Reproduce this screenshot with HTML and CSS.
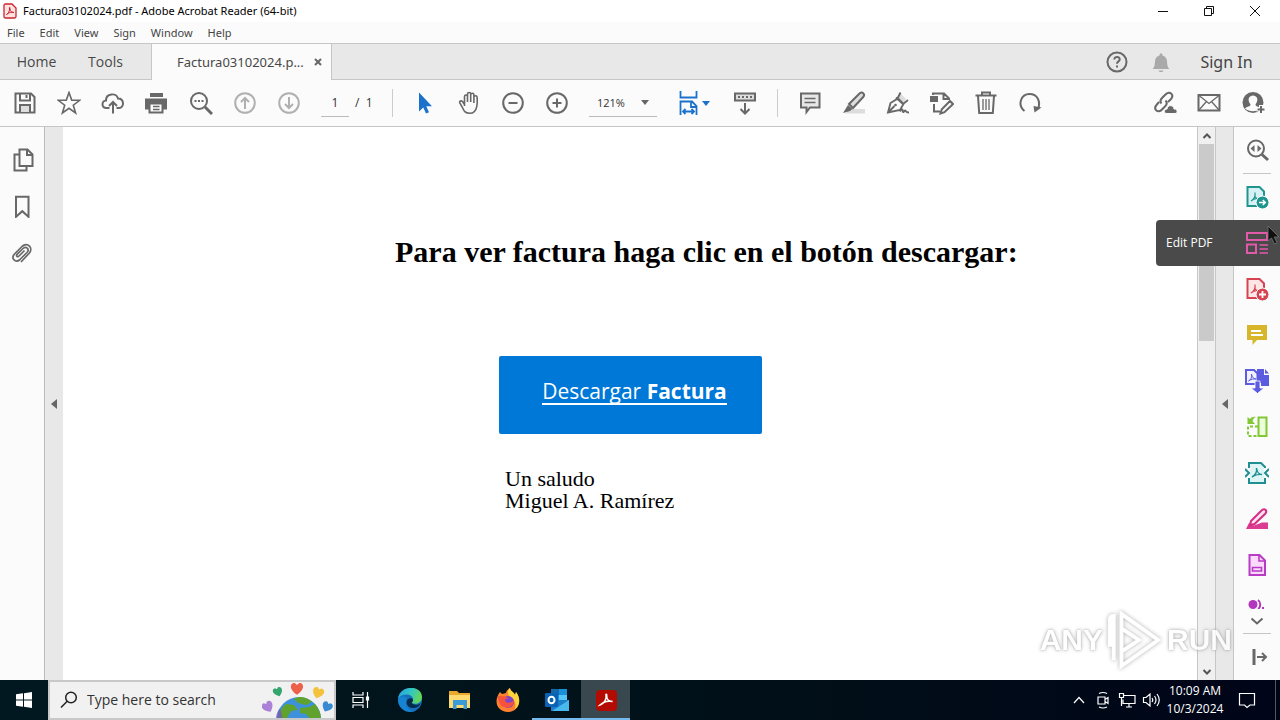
FILE: index.html
```html
<!DOCTYPE html>
<html lang="en">
<head>
<meta charset="utf-8">
<title>Factura03102024.pdf - Adobe Acrobat Reader (64-bit)</title>
<link rel="stylesheet" href="styles.css">
</head>
<body>
<header class="titlebar">
  <svg class="app-logo" viewBox="0 0 14 16"><path d="M1 2.500Q1 1 2.500 1H9l4 4v8.500Q13 15 11.500 15h-9Q1 15 1 13.500z" fill="#ffe3e1" stroke="#c9252d" stroke-width="1.300"/><path d="M3.500 11.500C5 11 7 8 6.500 5c-.3-1 .8-1 .5.500C6.700 8 9 10 11 9.500c-2-1-5 0-7.500 2z" fill="none" stroke="#c9252d"/></svg>
  <h1 class="window-title">Factura03102024.pdf - Adobe Acrobat Reader (64-bit)</h1>
  <div class="window-controls">
    <button class="win-btn" aria-label="Minimize"><svg viewBox="0 0 12 12"><path d="M1 6.500h10"/></svg></button>
    <button class="win-btn" aria-label="Restore"><svg viewBox="0 0 12 12"><path d="M1.500 3.500h7v7h-7zM3.500 3.500v-2h7v7h-2"/></svg></button>
    <button class="win-btn" aria-label="Close"><svg viewBox="0 0 12 12"><path d="M1 1l10 10M11 1L1 11"/></svg></button>
  </div>
</header>
<nav class="menubar" aria-label="Menu">
  <button>File</button><button>Edit</button><button>View</button><button>Sign</button><button>Window</button><button>Help</button>
</nav>
<nav class="tabs" aria-label="Tabs">
  <button class="tab tab-home">Home</button>
  <button class="tab tab-tools">Tools</button>
  <div class="tab-doc"><button class="tab-name">Factura03102024.p...</button><button class="tab-close" aria-label="Close tab"><svg viewBox="0 0 8 8"><path d="M1 1l6 6M7 1L1 7"/></svg></button></div>
  <div class="account">
    <button class="icon-btn" aria-label="Help"><svg class="icon" viewBox="0 0 24 24"><circle cx="12" cy="12" r="9.500"/><path d="M9.300 9.500c0-3.500 5.500-3.300 5.400-.1 0 2-2.700 2-2.700 4.300M12 15.500v2"/></svg></button>
    <button class="icon-btn bell" aria-label="Notifications"><svg class="icon" viewBox="0 0 24 24"><path d="M3.500 19c2-1.500 2.300-4 2.500-8 .2-3 1.800-5 4.500-5.600 0-3 3-3 3 0C16.200 6 17.800 8 18 11c.2 4 .5 6.500 2.500 8zM9.500 20.500h5c-.5 2-4.500 2-5 0z" fill="#a9a9a9" stroke="none"/></svg></button>
    <button class="sign-in">Sign In</button>
  </div>
</nav>
<div class="toolbar">
  <button class="icon-btn" aria-label="Save"><svg class="icon" viewBox="0 0 24 24"><path d="M2.500 2.500h15.500l3.500 3.500v15.500h-19z"/><path d="M7 2.500v7h10v-7M13.500 4v3"/><path d="M7 21v-7h10v7" fill="#ddd"/></svg></button>
  <button class="icon-btn" aria-label="Star"><svg class="icon" viewBox="0 0 24 24"><path d="M12 1.500l2.700 7.600 8 .2-6.400 4.900 2.300 7.800L12 17.300 5.400 22l2.300-7.800-6.400-4.900 8-.2z" stroke-width="1.600"/></svg></button>
  <button class="icon-btn" aria-label="Upload"><svg class="icon" viewBox="0 0 24 24"><path d="M8.500 17H5.500C0 17 .5 9.500 5 9.500c0-7.500 10.500-8 12-2 6.500 0 6.500 9.500 1 9.500h-2.500M12 22.500V11.500M8 15l4-4 4 4"/></svg></button>
  <button class="icon-btn" aria-label="Print"><svg class="icon" viewBox="0 0 24 24"><path d="M5 2h13v4H5zM0 7.500h22v11H0z" fill="#686868" stroke="none"/><path d="M4.500 12.500h13v9h-13z" fill="#fbfbfb"/><path d="M8 15.500h6.500M8 18.500h6.500" stroke-width="1.500"/></svg></button>
  <button class="icon-btn" aria-label="Find"><svg class="icon" viewBox="0 0 24 24"><circle cx="10" cy="10" r="8"/><path d="M16 16l7 7" stroke-width="3"/><path d="M5.500 10h2m1.500 0h2m1.500 0h2"/></svg></button>
  <button class="icon-btn faded" aria-label="Previous page"><svg class="icon" viewBox="0 0 24 24"><circle cx="12" cy="12" r="9.800"/><path d="M12 18V7M8 11l4-4 4 4"/></svg></button>
  <button class="icon-btn faded" aria-label="Next page"><svg class="icon" viewBox="0 0 24 24"><circle cx="12" cy="12" r="9.800"/><path d="M12 6v11M8 13l4 4 4-4"/></svg></button>
  <div class="pager"><input type="text" value="1" aria-label="Page number"><span>/&nbsp; 1</span></div>
  <span class="divider"></span>
  <button class="icon-btn" aria-label="Select"><svg class="icon" viewBox="0 0 24 24"><path d="M6 1.500v19l4.300-4 2.700 6 3-1.300-2.700-6H19z" fill="#1c72cb" stroke="none"/></svg></button>
  <button class="icon-btn" aria-label="Hand"><svg class="icon" viewBox="0 0 24 24"><path d="M6.500 15V5.500c0-2 3-2 3 0V11 3c0-2 3.200-2 3.200 0v8V3.800c0-2 3.200-2 3.200 0V12 6.300c0-2 3.200-2 3.200 0 .2 3 .5 6-.3 9-.8 4-3 7-7 7-4.800 0-6-2.500-7.500-6l-2.500-4.500c-.8-1.500 1.300-2.700 2.700-1.300l2 3" stroke-width="1.600" transform="translate(1 0)"/></svg></button>
  <button class="icon-btn" aria-label="Zoom out"><svg class="icon" viewBox="0 0 24 24"><circle cx="12" cy="12" r="9.800"/><path d="M7.500 12h9"/></svg></button>
  <button class="icon-btn" aria-label="Zoom in"><svg class="icon" viewBox="0 0 24 24"><circle cx="12" cy="12" r="9.800"/><path d="M7.500 12h9M12 7.500v9"/></svg></button>
  <div class="zoom-field"><select aria-label="Zoom level"><option>121%</option></select><svg viewBox="0 0 8 5"><path d="M0 0h8L4 5z"/></svg></div>
  <button class="icon-btn fit" aria-label="Fit width"><svg class="icon blue" viewBox="0 0 24 24"><path d="M3.500 0v6.500h16V0M3.500 24V10.500H15l4.500 4.500v9M14 11v5h5M6 20.500h11M8.500 18L6 20.500 8.500 23M14.500 18l2.500 2.500-2.500 2.500" stroke-width="1.800"/></svg><svg class="caret" viewBox="0 0 8 5"><path d="M0 0h8L4 5z"/></svg></button>
  <button class="icon-btn" aria-label="Scrolling"><svg class="icon" viewBox="0 0 24 24"><path d="M2 2.500h20v7H2z" fill="#ddd"/><path d="M5 6h2m2 0h2m2 0h2m2 0h2M12 12v10M7.500 18l4.500 4.500 4.500-4.500"/></svg></button>
  <span class="divider divider-wide"></span>
  <button class="icon-btn" aria-label="Comment"><svg class="icon" viewBox="0 0 24 24"><path d="M3 2.500h18.500v14H12L8.500 21v-4.500H3z" fill="#e7e7e7"/><path d="M6.500 7.500h11M6.500 11.500h11" stroke-width="1.500"/></svg></button>
  <button class="icon-btn" aria-label="Highlight"><svg class="icon" viewBox="0 0 24 24"><path d="M8 18h15v4.500H3z" fill="#ddd" stroke="none"/><path d="M7 13L17.500 2.500c3-2.500 6 1 3.700 3.500L11 17z" fill="#ddd"/><path d="M6 14l4.500 4-2.500 2-7 2z" fill="#686868" stroke="none"/></svg></button>
  <button class="icon-btn" aria-label="Sign"><svg class="icon" viewBox="0 0 24 24"><path d="M10.500 7L14 2l6 6-4 5z" fill="#ddd" stroke="none"/><path d="M2 21.500L4.500 12 12 7.500l5.500 5.500-3.500 6zM2 21.500l6.500-6.500M10 6.500l7.500 7M11.500 7.500l3-6M17 13l5-4M14 20.500c4-6 2 3 4 0s1 1.500 5 1" stroke-width="1.900"/><circle cx="9.500" cy="14" r="1.300" fill="#686868" stroke="none"/></svg></button>
  <button class="icon-btn" aria-label="Edit"><svg class="icon" viewBox="0 0 24 24"><path d="M0 5h8v6H0z" fill="#686868" stroke="none"/><path d="M3 4V2.500h11l5 5V9M4 13v7.500h6M13.500 3v5H19M10.500 22.500l1.300-4.200L20 10l3 3-8.500 8.200z"/></svg></button>
  <button class="icon-btn" aria-label="Delete"><svg class="icon" viewBox="0 0 24 24"><path d="M1.500 4.500h21M8 4V1.500h8V4M4 5l1.200 17h13.600L20 5"/><path d="M9 8v11M12 8v11M15 8v11" stroke-width="1.300"/></svg></button>
  <button class="icon-btn" aria-label="Rotate"><svg class="icon" viewBox="0 0 24 24"><path d="M6.500 20C-1 14 3 3 11.500 3c8 0 11.500 7.500 8.500 15"/><path d="M23.500 16.500l-7 5-1-6.500z" fill="#686868" stroke="none"/></svg></button>
  <div class="share">
    <button class="icon-btn" aria-label="Share link"><svg class="icon" viewBox="0 0 24 24"><path d="M8.500 12.500c-2-2-1-4 1-6l3-3c4-4.500 9 .5 5.500 4.500L15 11M12.500 9.500c2 2 1.500 4-.5 6l-3 3c-4 4.500-9-.5-5.500-4.500L6 11"/><path d="M14 22.500c-4 0-3-4.500 0-4.500 1-5 7-4 7 0 4-.5 4 4.500 1 4.500z" fill="#686868" stroke="#fbfbfb" stroke-width="1"/></svg></button>
    <button class="icon-btn" aria-label="Email"><svg class="icon" viewBox="0 0 24 24"><path d="M1.500 4h21v15.500h-21z"/><path d="M2 4.500l10 8 10-8M2 19l7.500-8.500M22 19l-7.500-8.500" stroke-width="1.300"/></svg></button>
    <button class="icon-btn" aria-label="Invite"><svg class="icon" viewBox="0 0 24 24"><circle cx="12" cy="11.500" r="10.500" fill="#686868" stroke="none"/><path d="M4 17.500c2-2.500 5.500-1.500 5.500-4C5.500 8 8.500 4.500 12 4.500s6.500 3.500 2.500 9c0 2.500 3.500 1.500 5 4-4 3.500-11 3.500-15.500 0z" fill="#fbfbfb" stroke="none"/><path d="M20 14v9M15.500 18.500h9" stroke="#fbfbfb" stroke-width="4"/><path d="M20 15v7M16.500 18.500h7"/></svg></button>
  </div>
</div>
<div class="workspace">
  <aside class="rail">
    <button class="rail-btn" aria-label="Thumbnails"><svg class="icon" viewBox="0 0 24 24"><path d="M8.500 1.500h8l5 5V18h-13zM16 2v5h5M8 6.500H3.500V22.500H15.500V19"/></svg></button>
    <button class="rail-btn" aria-label="Bookmarks"><svg class="icon" viewBox="0 0 24 24"><path d="M5 2.800h12.500v20l-6.200-5.600L5 22.800z"/></svg></button>
    <button class="rail-btn" aria-label="Attachments"><svg class="icon" viewBox="0 0 24 24"><path d="M15.500 8.500L10 14c-1.500 1.700-3.300-.3-1.800-1.800L14 6.500c3-3 7 .8 4 4l-7 7c-4.500 4-9.500-1-5.500-5.500l7.500-7.500c5.500-5 12 1.500 7 7l-8 8.500" transform="translate(-2 2)" stroke-width="1.700"/></svg></button>
  </aside>
  <button class="gutter" aria-label="Open navigation pane"><svg viewBox="0 0 6 10"><path d="M6 0v10L0 5z"/></svg></button>
  <main class="document">
    <h2>Para ver factura haga clic en el botón descargar:</h2>
    <a class="download" href="#"><span>Descargar <b>Factura</b></span></a>
    <p>Un saludo<br>Miguel A. Ramírez</p>
  </main>
  <div class="scrollbar">
    <button aria-label="Scroll up"><svg viewBox="0 0 10 8"><path d="M1.500 6L5 2.500 8.500 6"/></svg></button>
    <div class="track"><div class="thumb"></div></div>
    <button aria-label="Scroll down"><svg viewBox="0 0 10 8"><path d="M1.500 2L5 5.500 8.500 2"/></svg></button>
  </div>
  <button class="gutter gutter-right" aria-label="Toggle tools pane"><svg viewBox="0 0 6 10"><path d="M6 0v10L0 5z"/></svg></button>
  <aside class="tools">
    <button class="tool" aria-label="Search tools"><svg class="icon" viewBox="0 0 24 24"><circle cx="11" cy="10.500" r="8"/><path d="M17 16.500l6 5.500" stroke-width="3"/><path d="M9.500 7v7l-4-3.500zM12.500 7v7l4-3.500z" fill="#686868" stroke="none"/></svg></button>
    <span class="rule"></span>
    <button class="tool" aria-label="Export PDF"><svg class="icon" viewBox="0 0 24 24"><path d="M2.500 2h12L19 6.500V21H2.500z" fill="#d5f1f3" stroke="#1f958f"/><path d="M6 16c3-1.500 4.500-5 4-8.500M9.500 11c1 2 3 3 5.500 3M6 16c2-2 5-3 9-2" stroke="#1f958f" stroke-width="1.200"/><circle cx="17.500" cy="17.500" r="6.500" fill="#1f958f" stroke="#fff" stroke-width="1"/><path d="M14 17.500h6M17.800 15l2.500 2.500-2.500 2.500" stroke="#fff" stroke-width="1.500"/></svg></button>
    <div class="tool-active"><span class="tip" id="edit-tip">Edit PDF</span><button class="tool" aria-labelledby="edit-tip"><svg class="icon" viewBox="0 0 24 24"><path d="M2 2h20v7H2zM2 13.500h9V22H2z" stroke="#e05aa9"/><path d="M14.500 14H23M14.500 18H23M14.500 22H23" stroke="#e05aa9" stroke-width="1.400"/></svg></button>
      <svg class="pointer" viewBox="0 0 13 20"><path d="M1 1v15l3.500-3 3 6 2.500-1.200-2.800-5.800H12z" fill="#111" stroke="#777" stroke-width=".8"/></svg></div>
    <button class="tool" aria-label="Create PDF"><svg class="icon" viewBox="0 0 24 24"><path d="M2.500 2h12L19 6.500V21H2.500z" fill="#ffe6e6" stroke="#d64351"/><path d="M6 16c3-1.500 4.500-5 4-8.500M9.500 11c1 2 3 3 5.500 3M6 16c2-2 5-3 9-2" stroke="#d64351" stroke-width="1.200"/><circle cx="17.500" cy="17.500" r="6.500" fill="#d64351" stroke="#fff" stroke-width="1"/><path d="M14 17.500h7M17.500 14v7" stroke="#fff" stroke-width="1.800"/></svg></button>
    <button class="tool" aria-label="Comment"><svg class="icon" viewBox="0 0 24 24"><path d="M2 2h20v15H12l-4.500 5V17H2z" fill="#d8b62a" stroke="none"/><path d="M6 8h10M6 12h12" stroke="#fff" stroke-width="1.800"/></svg></button>
    <button class="tool" aria-label="Combine files"><svg class="icon" viewBox="0 0 24 24"><path d="M12 0h7v6h5v11h-8v-3h-4z" fill="#5c5ce0" stroke="none"/><path d="M20 0l4 4.500h-4z" fill="#5c5ce0" stroke="none"/><path d="M1 1h8l3.500 3.500V15H1z" fill="#f2f2ff" stroke="#5c5ce0"/><path d="M3.500 12c2.500-1 3.500-4 3-7 .5 3 2 5 4.500 5-2.500-.3-5 0-7.500 2" stroke="#5c5ce0" stroke-width="1"/><path d="M10 12h5v7h4l-6.500 5.500L6 19h4z" fill="#5c5ce0" stroke="#fff" stroke-width=".8"/></svg></button>
    <button class="tool" aria-label="Organize pages"><svg class="icon" viewBox="0 0 24 24"><path d="M13.500 2.500h8v18.500h-8z" fill="#edffda" stroke="#82c836"/><path d="M13 11.500H3V21h11" stroke="#82c836" stroke-dasharray="3 2"/><path d="M2.500 9V2l2.500 2C6.500 2.500 8 1.500 11 2c-2 .5-2.500 1.500-3.500 4L10 9z" fill="#82c836" stroke="none"/></svg></button>
    <button class="tool" aria-label="Compress PDF"><svg class="icon" viewBox="0 0 24 24"><path d="M5 3h11l3 4v14H5z" fill="#def5f5" stroke="none"/><path d="M4 7V2h12l4 4v1M4 17v5h16v-5M0 8l4 4-4 4M24 8l-4 4 4 4" stroke="#1f8f91"/><path d="M7 16c4-2 5-5 4.500-9 .5 3.500 2 6.500 5.500 6.500-4-.5-7 .5-10 2.500" stroke="#1f8f91" stroke-width="1.400"/></svg></button>
    <button class="tool" aria-label="Redact"><svg class="icon" viewBox="0 0 24 24"><path d="M1 22l3-6 5 2.500 8-3h6V22z" fill="#dc3b92" stroke="none"/><path d="M6 14L17 3c3-2 5.500.8 3.500 3.500L9.500 17 5 18z" fill="#ffe4f2" stroke="#d52d83"/></svg></button>
    <button class="tool" aria-label="Prepare form"><svg class="icon" viewBox="0 0 24 24"><path d="M4.500 2h10L20 7.500V22H4.500z" fill="#fbd9fc" stroke="#b83bc4"/><path d="M14 2v6h6M7.500 14.500h9v3.500h-9z" stroke="#b83bc4" stroke-width="1.600"/></svg></button>
    <button class="tool tool-cut" aria-label="More tool"><svg class="icon" viewBox="0 0 24 24"><circle cx="8" cy="6.500" r="4.500" fill="#b336be" stroke="none"/><path d="M13 2c3 2 3 7 0 9M18 9v2" stroke="#b336be"/></svg></button>
    <button class="tool tool-more" aria-label="Scroll tools"><svg viewBox="0 0 14 8"><path d="M1.500 1.500L7 6.500l5.500-5"/></svg></button>
    <span class="rule"></span>
    <button class="tool" aria-label="Collapse pane"><svg class="icon" viewBox="0 0 24 24"><path d="M9 4v16" stroke-width="3"/><path d="M12 12h9M17 8l4 4-4 4"/></svg></button>
  </aside>
  <div class="watermark"><span>ANY</span><svg viewBox="0 0 60 64"><path d="M4 39V11q0-4 4-4v46M16 5l38 27-38 27V5zM16 20v24l18-12z"/></svg><span>RUN</span></div>
</div>
<footer class="taskbar">
  <button class="start" aria-label="Start"><svg viewBox="0 0 16 16"><path d="M0 2.300L7 1.300V7.500H0zM8 1.200L16 0v7.500H8zM0 8.500h7v6.200l-7-1zM8 8.500h8V16l-8-1.200z"/></svg></button>
  <label class="search"><svg class="lens" viewBox="0 0 18 18"><circle cx="11" cy="6.500" r="5.300"/><path d="M7.200 10.300L1 16.500"/></svg><input type="text" placeholder="Type here to search" aria-label="Search">
    <svg class="globe" viewBox="0 0 72 36"><defs><path id="heart" d="M0 4.500C-7 0-5-5-1.500-4.500L0-3l1.500-1.500C5-5 7 0 0 4.500z"/></defs><circle cx="37" cy="37" r="22" fill="#3d91dc"/><path d="M32 17c7-4 14-1 18 3l-6 3-8-2zM24 22l8 1 4 5-7 1-4 7h-8c0-6 3-11 7-14zM38 26l9-1 6-3c4 5 6 10 6 15H48l-4-5-6-1z" fill="#5fa32e"/><path d="M18 26c-3 4-4 7-4 11h7z" fill="#7356bc" opacity=".7"/><use href="#heart" transform="translate(35 7) scale(1.300)" fill="#ed604a"/><use href="#heart" transform="translate(16 10) rotate(-20)" fill="#34a66d"/><use href="#heart" transform="translate(56 11) rotate(18) scale(1.200)" fill="#f3c43b"/><use href="#heart" transform="translate(6 25) rotate(-30) scale(1.200)" fill="#a982d8"/><use href="#heart" transform="translate(65 25) rotate(25) scale(1.100)" fill="#388bd2"/></svg>
  </label>
  <button class="task" aria-label="Task view"><svg class="line" viewBox="0 0 18 18"><path d="M1 1v3h10V1M1 6.500h10v5H1zM1 17v-3h10v3M15.500 1v16M14.500 6h2v3h-2z"/></svg></button>
  <button class="task" aria-label="Edge"><svg viewBox="0 0 24 24"><defs><linearGradient id="edgeA" x2="1" y2=".3"><stop stop-color="#249fe8"/><stop offset=".6" stop-color="#35c8bd"/><stop offset="1" stop-color="#62d65c"/></linearGradient></defs><circle cx="12" cy="12" r="12" fill="#1670bd"/><path d="M0 11C2-4 24-3 24 9c0 6-6 8-10 6-1-.6 1-1.500 1-3.500C15 5 3 5 0 11z" fill="url(#edgeA)"/><path d="M9 11c-3 4 0 12 8 12-9 3-17-4-17-11 2-4 7-5 9-1z" fill="#1684d2"/><path d="M15 12c0 2-2 3-1 3.500 3 2 7 1.500 9-.5-2 4-4.500 5-8 5-6 0-8-6-5-9 2-1 5-1 5 1z" fill="#062c4a"/></svg></button>
  <button class="task" aria-label="File Explorer"><svg viewBox="0 0 24 24"><path d="M2 3h8l2 2h11v15H2z" fill="#e8a92c"/><path d="M2 7h21v13H2z" fill="#ffda70"/><path d="M6 12h14v9h-3.500v-4h-7v4H6z" fill="#3b9ad7"/></svg></button>
  <button class="task" aria-label="Firefox"><svg viewBox="0 0 24 24"><path d="M4 4l2 2 4-1C10 3 12 1 14 0c0 3 4 4 5 7l1-3c6 9 3 19-8 20C1 24-3 13 4 4z" fill="#ff812f"/><path d="M14 0c0 3 4 4 5 7l1-3c5 6 4 14-1 17 2-7-2-12-6-13-2-3-1-6 1-8z" fill="#ffd43b"/><circle cx="12" cy="14" r="6" fill="#7b45ce"/><path d="M2 8c4 1 7-1 11 3-4-1-5 1-3 3 3 2 6 0 8-2 0 6-5 9-10 7-4-1-6-6-6-11z" fill="#f5533d"/></svg></button>
  <button class="task open" aria-label="Outlook"><svg viewBox="0 0 24 24"><path d="M6 1h16v12H6z" fill="#1c8fd9"/><path d="M6 1h8v6H6z" fill="#1268ad"/><path d="M14 7h8v6h-8z" fill="#55c6f5"/><path d="M6 12h18v11H6z" fill="#1d7fcb"/><path d="M7 23l17-11v11z" fill="#47b9ef"/><rect y="5" width="13" height="14" rx="1" fill="#0a62b5"/><ellipse cx="6.500" cy="12" rx="3" ry="3.300" fill="none" stroke="#fff" stroke-width="2"/></svg></button>
  <button class="task open active" aria-label="Acrobat Reader"><svg viewBox="0 0 24 24"><rect x="2" y="2" width="21" height="21" rx="4" fill="#b30b00"/><path d="M6 17c4-1 7-6 6-10-.3-1 1-1 .7.500C12.300 11 15 14 18.500 13.500c-3-1-9 0-12.500 3.500z" fill="none" stroke="#fff" stroke-width="1.600"/></svg></button>
  <div class="tray">
    <button aria-label="Hidden icons"><svg class="line" viewBox="0 0 18 18"><path d="M4 12l5-5.500 5 5.500"/></svg></button>
    <button aria-label="Meet now"><svg class="line" viewBox="0 0 18 18"><path d="M4 6h7v7H4zM11 8.500l3-2v6l-3-2M5 2.500q4-2 8 0M5 16q4 2 8 0"/></svg></button>
    <button aria-label="Network"><svg class="line" viewBox="0 0 18 18"><path d="M6 4.500h11v8H5v-4M11 12.500V16M8 16h6M1.500 2.500h4v4h-4zM3.500 6.500V15"/></svg></button>
    <button aria-label="Volume"><svg class="line" viewBox="0 0 18 18"><path d="M1.500 6.500h2.500L8 3v12l-4-3.500H1.500zM10 7q1.500 2 0 4M12.500 5q3 4 0 8M15 3q4.500 6 0 12"/></svg></button>
    <button class="clock"><span>10:09 AM</span><span>10/3/2024</span></button>
    <button class="notices" aria-label="Notifications"><svg class="line" viewBox="0 0 18 18"><path d="M1.500 2.500h15v11.500H12L9 16.500 6.500 14h-5z"/></svg></button>
    <span class="desktop-edge"></span>
  </div>
</footer>
</body>
</html>
```

FILE: styles.css
```css
* { box-sizing: border-box; }
body { margin: 0; min-height: 100vh; display: flex; flex-direction: column; background: #fff; color: #333; font: 12px/16px "Open Sans", "Noto Sans", sans-serif; overflow: hidden; }
button { border: 0; padding: 0; margin: 0; background: none; color: inherit; font: inherit; display: flex; align-items: center; justify-content: center; flex: none; }
svg { flex: none; display: block; }
.titlebar { display: flex; align-items: center; height: 22px; padding-left: 3px; gap: 6px; }
.app-logo { width: 14px; height: 16px; }
.window-title { margin: 0; flex: 1; font-family: "Noto Sans", sans-serif; font-size: 11px; font-weight: 400; color: #000; white-space: nowrap; }
.window-controls { display: flex; padding-right: 2px; }
.win-btn { width: 46px; height: 22px; }
.win-btn svg { width: 12px; height: 12px; fill: none; stroke: #111; }
.menubar { display: flex; align-items: center; gap: 15px; height: 21px; padding-left: 7px; background: #fbfbfb; color: #444; font-family: "Noto Sans", sans-serif; font-size: 11px; }
.tabs { display: flex; height: 37px; background: #e8e8e8; border-top: 1px solid #c6c6c6; border-bottom: 1px solid #c6c6c6; font-size: 14px; line-height: 20px; color: #484848; }
.tab-home { width: 73px; }
.tab-tools { width: 65px; }
.tab-doc { display: flex; align-items: center; margin: 0 0 -1px 13px; padding-left: 25px; width: 181px; gap: 10px; background: #fbfbfb; border-left: 1px solid #c6c6c6; border-right: 1px solid #c6c6c6; font-family: "Noto Sans", sans-serif; font-size: 13px; }
.tab-close svg { width: 8px; height: 8px; stroke: #666; stroke-width: 2; }
.account { display: flex; margin-left: auto; align-items: center; padding-right: 26px; color: #444; font-family: "Noto Sans", sans-serif; font-size: 16px; }
.bell { width: 38px; }
.sign-in { width: 55px; margin-left: 16px; }
.icon-btn { width: 44px; height: 36px; }
.icon { width: 24px; height: 24px; fill: none; stroke: #686868; stroke-width: 2; }
.toolbar { display: flex; align-items: center; height: 47px; padding: 0 5px 0 3px; background: #fbfbfb; border-bottom: 1px solid #c6c6c6; }
.faded { opacity: .5; }
.pager { display: flex; align-items: center; width: 71px; margin-left: 10px; gap: 6px; color: #333; }
.pager input { width: 28px; height: 28px; padding: 0; border: 0; border-bottom: 1px solid #bbb; background: none; text-align: center; font: inherit; color: inherit; }
.divider { width: 1px; height: 28px; background: #ccc; margin-right: 10px; }
.divider-wide { margin-left: 10px; }
.zoom-field { display: flex; align-items: center; width: 68px; height: 28px; margin: 0 10px; border-bottom: 1px solid #bbb; }
.zoom-field select { appearance: none; border: 0; background: none; width: 52px; padding: 0 0 0 8px; font: inherit; font-size: 11px; color: inherit; }
.zoom-field svg, .caret { width: 8px; height: 5px; fill: #666; }
.fit { width: 56px; padding-right: 4px; }
.fit .blue { stroke: #1c72cb; }
.fit .caret { fill: #1c72cb; margin-left: 1px; }
.share { display: flex; margin-left: auto; }
.workspace { position: relative; display: flex; flex: 1; min-height: 0; }
.rail { display: flex; flex-direction: column; width: 45px; padding: 10px 0 0 1px; background: #fbfbfb; border-right: 1px solid #bbb; }
.rail-btn { width: 43px; height: 46px; }
.gutter { width: 18px; background: #e8e8e8; }
.gutter svg { width: 6px; height: 10px; fill: #666; }
.gutter-right { width: 19px; border-left: 1px solid #c6c6c6; border-right: 1px solid #c6c6c6; }
.document { flex: 1; min-width: 0; color: #000; font-family: "Liberation Serif", serif; }
.document h2 { margin: 107px 0 0 332px; font-size: 30px; line-height: 36px; white-space: nowrap; }
.download { display: flex; align-items: center; justify-content: center; width: 263px; height: 78px; margin: 86px auto 34px 436px; padding: 0 0 6px 8px; border-radius: 2px; background: #0078d7; color: #fff; font: 21px/30px "Open Sans", sans-serif; text-decoration: none; }
.download span { border-bottom: 2px solid #fff; line-height: 24px; }
.document p { margin: 0 0 0 442px; font-size: 22px; line-height: 22px; }
.scrollbar { display: flex; flex-direction: column; width: 18px; padding: 0 1px; background: #f0f0f0; border-left: 1px solid #c6c6c6; }
.scrollbar button { height: 17px; }
.scrollbar svg { width: 10px; height: 8px; fill: none; stroke: #555; stroke-width: 2; }
.track { flex: 1; }
.thumb { height: 38%; background: #cacaca; }
.tools { display: flex; flex-direction: column; width: 46px; background: #fbfbfb; }
.tool { width: 46px; height: 46px; }
.rule { width: 28px; height: 1px; margin: 0 auto 0 9px; background: #c6c6c6; flex: none; }
.tool-active { position: relative; background: #4a4a4a; }
.tip { position: absolute; right: 100%; top: 0; width: 78px; height: 46px; padding-left: 10px; border-radius: 4px 0 0 4px; background: #4a4a4a; color: #fff; line-height: 46px; }
.pointer { position: absolute; left: 33px; top: 5px; width: 13px; height: 20px; }
.tool-cut { height: 21px; overflow: hidden; align-items: flex-start; padding-top: 10px; }
.tool-more { height: 24px; }
.tool-more svg { width: 14px; height: 8px; fill: none; stroke: #666; stroke-width: 2; }
.watermark { position: absolute; right: 48px; bottom: 8px; display: flex; align-items: center; gap: 3px; color: #fff; font: bold 30px/64px "Liberation Sans", sans-serif; text-shadow: 0 0 2px #999, 0 0 4px #aaa; pointer-events: none; opacity: .8; }
.watermark svg { width: 58px; height: 64px; fill: none; stroke: #fff; stroke-width: 4; filter: drop-shadow(0 0 2px #999); }
.taskbar { display: flex; height: 40px; background: linear-gradient(90deg, #021820, #011018 60%, #000418); color: #fff; }
.start { width: 48px; }
.start svg { width: 16px; height: 16px; fill: #fff; }
.search { display: flex; align-items: center; width: 288px; padding-left: 10px; background: #f1f1f1; border: 2px solid #c8c8c8; }
.lens { width: 18px; height: 18px; fill: none; stroke: #222; stroke-width: 1.5; }
.search input { flex: 1; min-width: 0; margin-left: 9px; padding: 0; border: 0; background: none; font: 14px/20px "Open Sans", sans-serif; }
.search input::placeholder { color: #333; opacity: 1; }
.globe { width: 72px; height: 36px; }
.task { width: 49px; }
.task svg { width: 24px; height: 24px; }
.line, .task .line { width: 18px; height: 18px; fill: none; stroke: #fff; stroke-width: 1.2; }
.open { box-shadow: inset 0 -2px #76b9ed; }
.active { background: #39474f; }
.tray { display: flex; margin-left: auto; }
.tray button { width: 24px; }
.tray .clock { width: 64px; flex-direction: column; line-height: 18px; white-space: nowrap; }
.tray .notices { width: 40px; }
.desktop-edge { width: 5px; margin-left: 8px; border-left: 1px solid #555; }
```
